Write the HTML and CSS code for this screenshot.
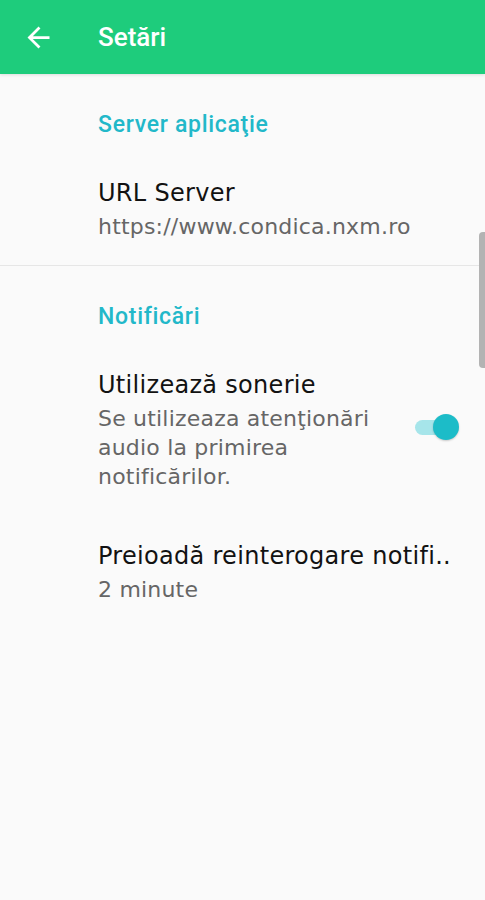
FILE: index.html
```html
<!DOCTYPE html>
<html lang="ro">

<head>
  <meta charset="UTF-8">
  <meta name="viewport" content="width=device-width, initial-scale=1.0">
  <title>Setări</title>

  <link rel="stylesheet" href="styles.css">
</head>

<body>
  <header class="toolbar">
    <svg class="back" viewBox="0 0 24 24">
      <path d="M20 11H7.83l5.59-5.59L12 4l-8 8 8 8 1.41-1.41L7.83 13H20v-2z" fill="#fff" />
    </svg>
    <h1 class="title">Setări</h1>
  </header>

  <main class="prefs">
    <section class="group">
      <h2 class="group-title">Server aplicaţie</h2>
      <div class="pref">
        <div class="pref-text">
          <div class="pref-name">URL Server</div>
          <div class="pref-summary">https://www.condica.nxm.ro</div>
        </div>
      </div>
    </section>

    <section class="group">
      <h2 class="group-title">Notificări</h2>
      <div class="pref">
        <div class="pref-text pref-text-narrow">
          <div class="pref-name">Utilizează sonerie</div>
          <div class="pref-summary">Se utilizeaza atenţionări audio la primirea notificărilor.</div>
        </div>
        <div class="switch">
          <span class="switch-track"></span>
          <span class="switch-thumb"></span>
        </div>
      </div>
      <div class="pref">
        <div class="pref-text">
          <div class="pref-name">Preioadă reinterogare notifi..</div>
          <div class="pref-summary">2 minute</div>
        </div>
      </div>
    </section>
  </main>

  <div class="scrollbar"></div>
</body>

</html>
```

FILE: styles.css
```css
body {
  background: #fafafa;
  font-family: "DejaVu Sans", Roboto, sans-serif;
  margin: 0;
  overflow: hidden;
}

.toolbar {
  align-items: center;
  background: #1ecc7c;
  box-shadow: 0 1px 3px rgba(0, 0, 0, 0.12);
  display: flex;
  height: 74px;
}

.back {
  height: 33px;
  margin-left: 22px;
  width: 33px;
}

.title {
  color: #fff;
  font-family: Roboto, sans-serif;
  font-size: 26px;
  font-weight: 500;
  margin: 0 0 0 43px;
}

.group {
  border-bottom: 1px solid #e6e6e6;
  padding: 38px 0 14px 98px;
}

.group:last-child {
  border-bottom: none;
}

.group-title {
  color: #22b8c9;
  font-family: Roboto, sans-serif;
  font-size: 23px;
  font-weight: 500;
  letter-spacing: 0.7px;
  line-height: 26px;
  margin: 0;
}

.pref {
  align-items: center;
  display: flex;
  padding: 40px 26px 10px 0;
}

.pref-text {
  flex: 1;
  min-width: 0;
}

.pref-text-narrow {
  max-width: 290px;
}

.pref-name {
  color: #121212;
  font-size: 24px;
  letter-spacing: 0.3px;
  line-height: 30px;
  white-space: nowrap;
}

.pref-summary {
  color: #666;
  font-size: 22px;
  letter-spacing: 0.2px;
  line-height: 29px;
  margin-top: 4px;
}

.switch {
  height: 26px;
  margin: 0 0 7px auto;
  position: relative;
  width: 44px;
}

.switch-track {
  background: #a6e5ea;
  border-radius: 8px;
  height: 15px;
  left: 0;
  position: absolute;
  top: 6px;
  width: 34px;
}

.switch-thumb {
  background: #1cbcc8;
  border-radius: 50%;
  box-shadow: 0 1px 2px rgba(0, 0, 0, 0.2);
  height: 26px;
  position: absolute;
  right: 0;
  top: 0;
  width: 26px;
}

.scrollbar {
  background: #b3b3b3;
  border-radius: 4px 0 0 4px;
  height: 136px;
  position: absolute;
  right: 0;
  top: 232px;
  width: 6px;
}
```
